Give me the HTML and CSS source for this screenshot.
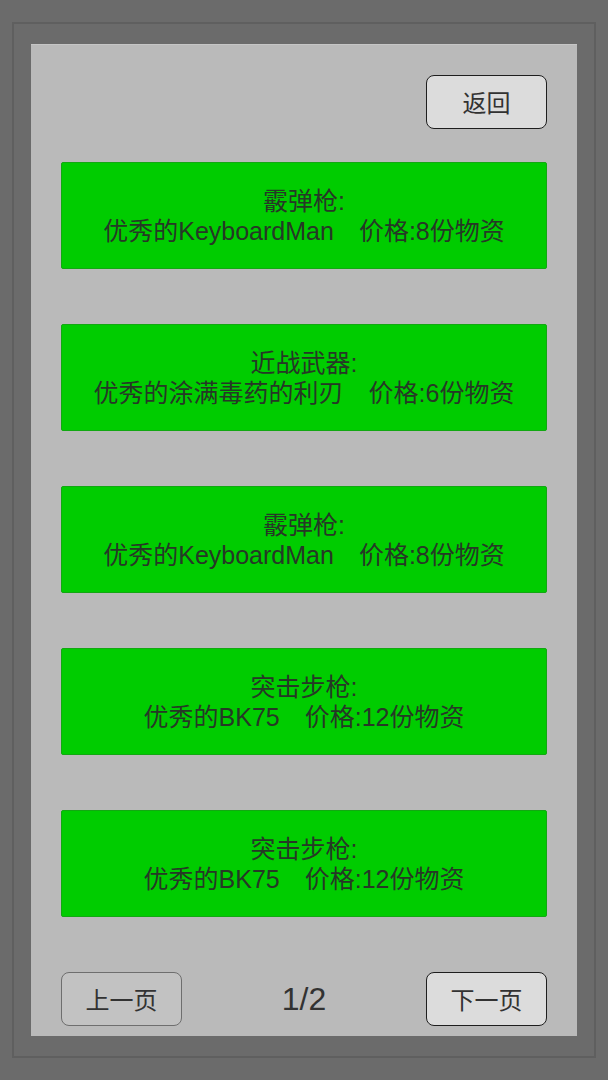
FILE: index.html
```html
<!DOCTYPE html>
<html lang="zh">
<head>
<meta charset="utf-8">
<title>商店</title>
<link rel="stylesheet" href="styles.css">
</head>
<body>
<div class="frame">
  <div class="panel">
    <div class="header">
      <button class="btn btn-active">返回</button>
    </div>
    <div class="list">
      <div class="card"><span class="line">霰弹枪:</span><span class="line">优秀的KeyboardMan　价格:8份物资</span></div>
      <div class="card"><span class="line">近战武器:</span><span class="line">优秀的涂满毒药的利刃　价格:6份物资</span></div>
      <div class="card"><span class="line">霰弹枪:</span><span class="line">优秀的KeyboardMan　价格:8份物资</span></div>
      <div class="card"><span class="line">突击步枪:</span><span class="line">优秀的BK75　价格:12份物资</span></div>
      <div class="card"><span class="line">突击步枪:</span><span class="line">优秀的BK75　价格:12份物资</span></div>
    </div>
    <div class="footer">
      <button class="btn btn-disabled">上一页</button>
      <span class="page">1/2</span>
      <button class="btn btn-active">下一页</button>
    </div>
  </div>
</div>
</body>
</html>
```
FILE: styles.css
```css
html, body {
  margin: 0;
  padding: 0;
}
body {
  background: #6b6b6b;
  width: 608px;
  height: 1080px;
  overflow: hidden;
  font-family: "Liberation Sans", "Noto Sans CJK SC", sans-serif;
  color: #323232;
}
.frame {
  box-sizing: border-box;
  margin: 22px 0 0 12px;
  width: 584px;
  height: 1036px;
  border: 2px solid #5f5f5f;
  padding: 20px 17px;
}
.panel {
  box-sizing: border-box;
  width: 546px;
  height: 992px;
  background: #bababa;
  border-top: 1px solid #c6c6c6;
  padding: 30px 30px 10px 30px;
  display: flex;
  flex-direction: column;
}
.header {
  display: flex;
  justify-content: flex-end;
}
.btn {
  box-sizing: border-box;
  width: 121px;
  height: 54px;
  border-radius: 8px;
  font-family: "Liberation Sans", "Noto Sans CJK SC", sans-serif;
  font-size: 24px;
  color: #323232;
  padding: 0 0 2px 0;
  margin: 0;
  display: flex;
  align-items: center;
  justify-content: center;
}
.btn-active {
  background: #dcdcdc;
  border: 1.5px solid #1e1e1e;
}
.btn-disabled {
  background: #c2c2c2;
  border: 1.5px solid #6e6e6e;
}
.list {
  margin-top: 33px;
  display: flex;
  flex-direction: column;
  gap: 55px;
}
.card {
  box-sizing: border-box;
  height: 107px;
  background: #00cc00;
  border: 1px solid #12a812;
  border-radius: 2px;
  display: flex;
  flex-direction: column;
  align-items: center;
  justify-content: center;
  font-size: 25px;
  line-height: 30px;
  color: #263826;
  text-align: center;
}
.line {
  display: block;
  white-space: pre;
}
.footer {
  margin-top: 55px;
  display: flex;
  justify-content: space-between;
  align-items: center;
}
.page {
  font-size: 32px;
  color: #323232;
}
```
